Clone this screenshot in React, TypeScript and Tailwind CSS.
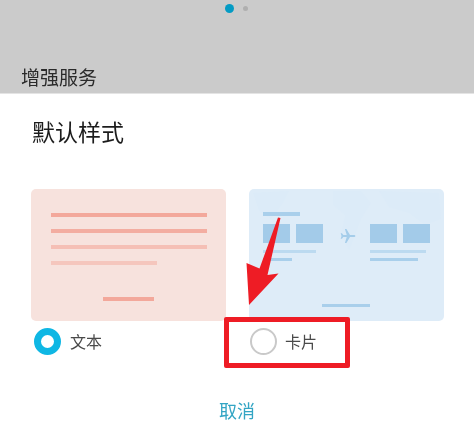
import React from 'react';

// Faint bars inside the preview cards
const Bar = ({ className }: { className: string }) => <div className={`h-[4px] ${className}`} />;

const Plane = () => (
  <svg width="16" height="16" viewBox="0 0 24 24" className="fill-[#a5cdea]">
    <path d="M23 12c0-1-1-1.6-2-1.6h-6L9.6 1.5H7.4l2.7 8.9H5L2.9 7.8H1l1.3 4.2L1 16.200h1.900L5 13.600h5.100l-2.700 8.900h2.200l5.400-8.900h6C22 13.600 23 13 23 12z" />
  </svg>
);

// Very faint world map behind the flight preview
const MapTexture = () => (
  <svg className="absolute left-0 top-0" width="195" height="132" viewBox="0 0 195 132">
    <path d="M4 4 L40 2 L34 14 L22 30 L10 22 Z" fill="#dcebf8" />
    <path d="M84 2 L112 2 L122 14 L112 30 L100 62 L92 44 L96 26 L84 16 Z" fill="#dcebf8" />
    <path d="M130 2 L190 4 L192 30 L176 36 L160 24 L140 18 Z" fill="#dcebf8" />
  </svg>
);

const TextPreview = () => (
  <div className="flex h-[132px] w-[195px] flex-col rounded-[5px] bg-[#f7e2dd] px-[20px] pt-[24px]">
    <div className="flex flex-col gap-[12px]">
      <Bar className="w-[156px] bg-[#f3a89b]" />
      <Bar className="w-[156px] bg-[#f3ada1]" />
      <Bar className="w-[156px] bg-[#f5bfb5]" />
      <Bar className="w-[106px] bg-[#f5c6bd]" />
    </div>
    <Bar className="mx-auto mt-[32px] w-[51px] bg-[#f3a89b]" />
  </div>
);

const TripColumn = ({ top, line1, line2 }: { top: boolean; line1: string; line2: string }) => (
  <div className="flex flex-col">
    {top ? <Bar className="mb-[8px] w-[37px] bg-[#a9cfeb]" /> : <div className="mb-[8px] h-[4px]" />}
    <div className="flex gap-[6px]">
      <div className="h-[19px] w-[27px] bg-[#a3cbe9]" />
      <div className="h-[19px] w-[27px] bg-[#a3cbe9]" />
    </div>
    <div className={`mt-[7px] h-[3px] bg-[#bcdaf0] ${line1}`} />
    <div className={`mt-[5px] h-[3px] bg-[#a9cfeb] ${line2}`} />
  </div>
);

const CardPreview = () => (
  <div className="relative h-[132px] w-[195px] overflow-hidden rounded-[5px] bg-[#deecf8]">
    <MapTexture />
    <div className="relative flex h-full flex-col pl-[14px] pt-[23px]">
      <div className="flex items-start">
        <TripColumn top line1="w-[53px]" line2="w-[29px]" />
        <div className="ml-[17px] mt-[16px]"><Plane /></div>
        <div className="ml-[14px]">
          <TripColumn top={false} line1="w-[56px]" line2="w-[48px]" />
        </div>
      </div>
      <div className="ml-[59px] mt-[43px] h-[3px] w-[48px] bg-[#a9cfeb]" />
    </div>
  </div>
);

export default function App() {
  return (
    <div
      className="relative h-[440px] w-[474px] overflow-hidden bg-white blur-[0.4px]"
      style={{ fontFamily: '"Noto Sans CJK SC", "Noto Sans", sans-serif' }}
    >
      {/* dimmed page behind the dialog */}
      <div className="flex h-[94px] flex-col border-b border-[#e4e4e4] bg-[#cbcbcb]">
        <div className="ml-[225px] mt-[4px] flex items-center gap-[9px]">
          <span className="h-[9px] w-[9px] rounded-full bg-[#049bc4]" />
          <span className="h-[5px] w-[5px] rounded-full bg-[#afafaf]" />
        </div>
        <div className="ml-[21px] mt-[50px] text-[19px] leading-[27px] text-[#2a2a2a]">增强服务</div>
      </div>

      <div className="pl-[32px] pt-[20px] text-[23px] leading-[34px] text-[#1c1c1c]">默认样式</div>

      <div className="mt-[41px] flex gap-[23px] pl-[31px]">
        <div className="w-[195px]">
          <TextPreview />
          <div className="ml-[3px] mt-[7px] flex items-center">
            <span className="h-[27px] w-[27px] rounded-full border-[7px] border-[#0fb7e4]" />
            <span className="ml-[9px] text-[16px] leading-[27px] text-[#4a4a4a]">文本</span>
          </div>
        </div>
        <div className="w-[195px]">
          <CardPreview />
          <div className="mt-[7px] flex items-center pl-[1px]">
            <span className="h-[27px] w-[27px] rounded-full border-2 border-[#c9c9c9]" />
            <span className="ml-[8px] text-[16px] leading-[27px] text-[#4a4a4a]">卡片</span>
          </div>
        </div>
      </div>

      <div className="mt-[42px] pl-[219px] text-[18px] leading-[26px] text-[#33a5c4]">取消</div>

      {/* red annotation on top of the screenshot */}
      <div className="absolute left-[224px] top-[317px] h-[51px] w-[126px] rounded-[2px] border-[5px] border-[#ee1c25]" />
      <svg className="absolute left-0 top-0" width="474" height="440" viewBox="0 0 474 440">
        <path d="M249 305 L246.500 263 L259.500 268.500 L278 217.500 L280.500 218 L267.500 275 L278.500 273.500 Z" fill="#ee1c25" />
      </svg>
    </div>
  );
}
